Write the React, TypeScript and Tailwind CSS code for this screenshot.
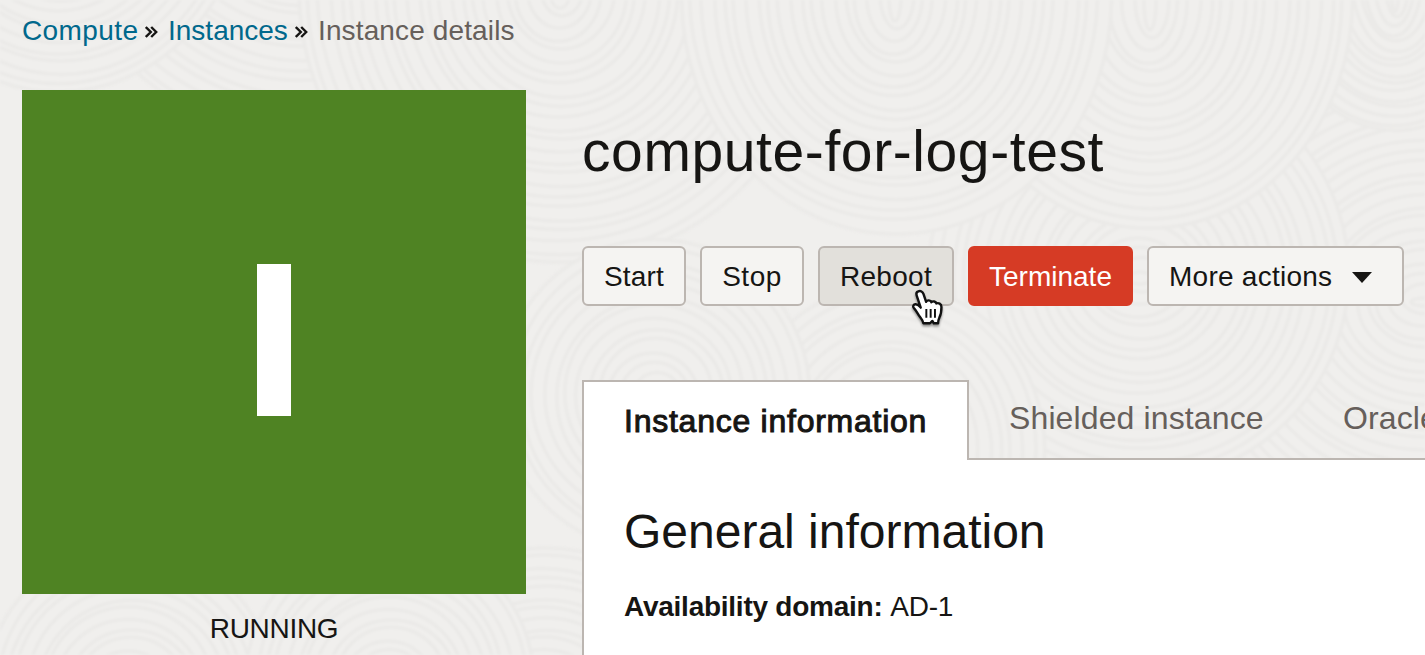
import React from "react";

type RingGroup = { x: number; y: number; rx: number; ry: number; step: number; count: number };

const groups: RingGroup[] = [
  { x: 300, y: -150, rx: 10, ry: 30, step: 11, count: 24 },
  { x: 60, y: -120, rx: 10, ry: 30, step: 10, count: 19 },
  { x: 1425, y: 300, rx: 14, ry: 4, step: 11, count: 22 },
  { x: 1140, y: 276, rx: 12, ry: 6, step: 11, count: 19 },
  { x: 560, y: -10, rx: 10, ry: 16, step: 11, count: 24 },
  { x: 1395, y: -20, rx: 4, ry: 30, step: 8, count: 16 },
  { x: 1150, y: 0, rx: 6, ry: 28, step: 11, count: 19 },
  { x: 895, y: -5, rx: 6, ry: 24, step: 11, count: 20 },
  { x: 890, y: 450, rx: 12, ry: 20, step: 11, count: 14 },
  { x: 655, y: 395, rx: 12, ry: 10, step: 11, count: 14 },
  { x: 545, y: 720, rx: 10, ry: 10, step: 10, count: 17 },
  { x: 130, y: 690, rx: 14, ry: 10, step: 10, count: 14 },
  { x: 390, y: 680, rx: 14, ry: 10, step: 10, count: 14 },
];

function Contours() {
  return (
    <svg className="pointer-events-none absolute inset-0 h-full w-full blur-[1px]" viewBox="0 0 1425 655" aria-hidden="true">
      {groups.map((g, i) => (
        <g key={i} fill="#f0efed" stroke="#ebeae8" strokeWidth="3.5">
          {Array.from({ length: g.count }, (_, k) => g.count - 1 - k).map((k) => (
            <ellipse
              key={k}
              cx={g.x + Math.sin(k * 1.7) * 2}
              cy={g.y + Math.cos(k * 2.3) * 2}
              rx={g.rx + k * g.step}
              ry={g.ry + k * g.step * 1.02}
            />
          ))}
        </g>
      ))}
    </svg>
  );
}

function Chevrons({ className }: { className: string }) {
  return (
    <svg className={className} width="13" height="12" viewBox="0 0 13 12" fill="none" stroke="#161513" strokeWidth="2.4">
      <path d="M.8 1l5 5-5 5M6.200 1l5 5-5 5" />
    </svg>
  );
}

function HandCursor() {
  return (
    <svg className="absolute left-[91px] top-[42px] z-10 drop-shadow-[0_2px_1px_rgba(0,0,0,0.4)]" width="39" height="41" viewBox="0 0 36 38">
      <path
        d="M8.500 3.200c2.200-1 4.100.2 4.800 2.300l2.500 7.300c.8-1.900 4.200-1.800 4.800.4 1.300-1.400 4.300-.8 4.700 1.100 1.800-.8 4.700.2 4.700 3.200 0 4.200-.4 6.800-1.800 9.500-.8 1.700-1.300 3-1.300 5.700h-4l-1.300-2.200-2.200 2.200h-6.200c-.2-2.700-1.500-3.800-3.200-6-2-2.700-3.200-5.800-5.500-8-1.600-1.700-.4-3.900 1.800-3.600 1.900.2 3.400 1.700 4.500 3.100L7 6.800c-.5-1.500-.1-3 1.500-3.600z"
        fill="#fff"
        stroke="#111"
        strokeWidth="2.200"
        strokeLinejoin="round"
      />
      <path d="M16 19.500v8M20 19.500v8M24 19.500v8" stroke="#111" strokeWidth="1.800" />
    </svg>
  );
}

const button = "flex h-[60px] shrink-0 items-center justify-center rounded-[6px] border-2 border-[#bcb6b1] bg-[#f5f4f2] pt-px text-[28px]";

export default function App() {
  return (
    <div className="relative h-[655px] w-[1425px] overflow-hidden bg-[#f0efed] font-['Liberation_Sans',Arial,sans-serif] text-[#161513]">
      <Contours />
      <div className="relative flex h-full flex-col pl-[22px]">
        <nav className="flex h-[90px] shrink-0 items-start pt-[15px] text-[28px] leading-8 whitespace-nowrap">
          <a className="w-[123px] tracking-[0.4px] text-[#00688c]">Compute</a>
          <Chevrons className="mt-[11px]" />
          <a className="ml-[10px] w-[127px] text-[#00688c]">Instances</a>
          <Chevrons className="mt-[11px]" />
          <span className="ml-[10px] tracking-[0.13px] text-[#665f5b]">Instance details</span>
        </nav>
        <div className="flex min-h-0 flex-1">
          <aside className="w-[504px] shrink-0">
            <div className="flex h-[504px] items-center justify-center bg-[#4f8323]">
              <div className="mt-[-4px] h-[152px] w-[34px] bg-white" />
            </div>
            <p className="mt-[19px] text-center text-[28px] leading-8 tracking-[-0.3px]">RUNNING</p>
          </aside>
          <main className="ml-[56px] flex min-w-0 flex-1 flex-col">
            <h1 className="mt-[29px] h-16 text-[57px] leading-16 tracking-[0.6px] whitespace-nowrap">compute-for-log-test</h1>
            <div className="mt-[63px] flex gap-[14px]">
              <button className={`${button} w-[104px] tracking-[0.2px]`}>Start</button>
              <button className={`${button} w-[104px] tracking-[0.5px]`}>Stop</button>
              <div className="relative">
                <button className={`${button} w-[136px] bg-[#e2e0db]! tracking-[0.3px]`}>Reboot</button>
                <HandCursor />
              </div>
              <button className={`${button} w-[165px] border-[#d63b25]! bg-[#d63b25]! text-white`}>Terminate</button>
              <button className={`${button} w-[257px] justify-start! pl-[20px] tracking-[0.25px]`}>
                <span className="w-[183px] text-left">More actions</span>
                <svg className="mt-px" width="20" height="11" viewBox="0 0 20 11" fill="#161513"><path d="M0 0h20L10 11z" /></svg>
              </button>
            </div>
            <section className="mt-[74px] flex min-h-0 flex-1 flex-col">
              <div className="flex h-20 shrink-0 whitespace-nowrap">
                <div className="w-[387px] shrink-0 border-2 border-b-0 border-[#bcb6b1] bg-white pt-[21px] pl-10 text-[32px] leading-9 tracking-[0.75px] [-webkit-text-stroke:1px_#161513]">Instance information</div>
                <div className="flex flex-1 border-b-2 border-[#bcb6b1] pt-5 pl-10 text-[32px] leading-9 tracking-[0.12px] text-[#665f5b]">
                  <span className="w-[334px] shrink-0">Shielded instance</span>
                  <span>Oracle</span>
                </div>
              </div>
              <div className="flex-1 border-l-2 border-[#bcb6b1] bg-white pl-10">
                <h2 className="mt-[44px] text-[48px] leading-14">General information</h2>
                <p className="mt-[31px] text-[28px] leading-8"><b className="tracking-[-0.25px]">Availability domain:</b> <span className="tracking-[-0.2px]">AD-1</span></p>
              </div>
            </section>
          </main>
        </div>
      </div>
    </div>
  );
}
